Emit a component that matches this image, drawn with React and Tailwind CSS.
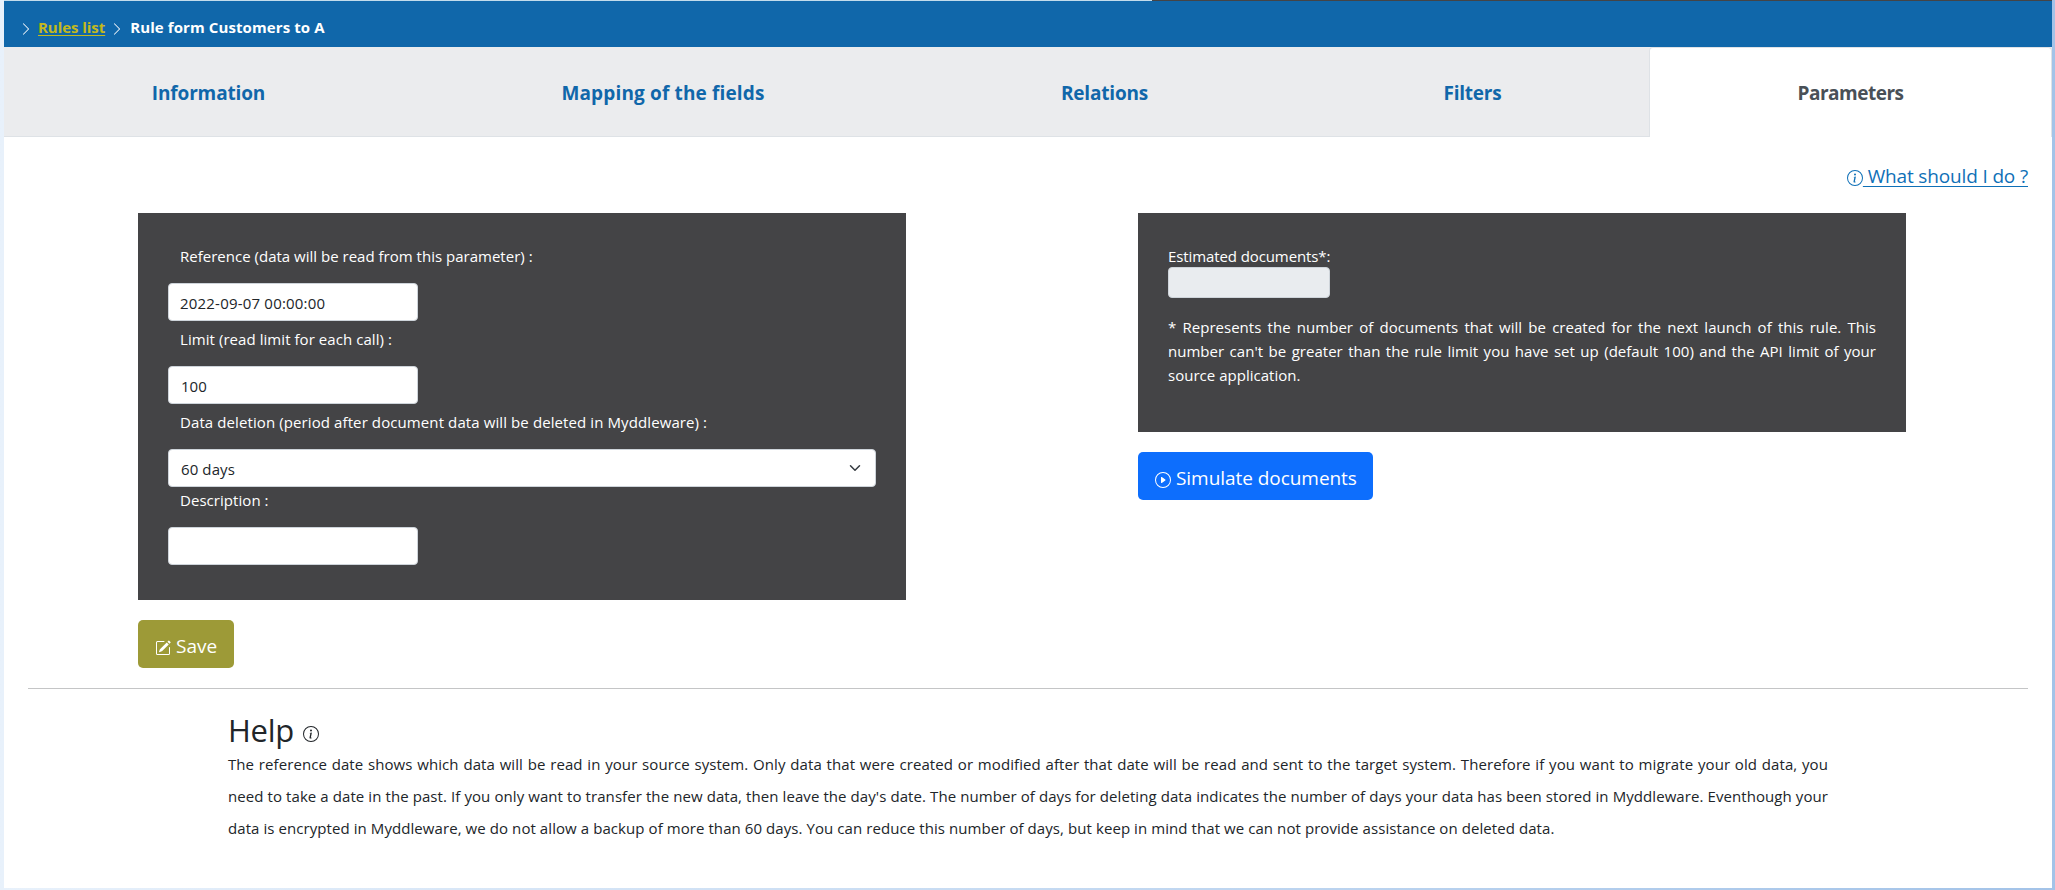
import { BsChevronRight, BsInfoCircle, BsPlayCircle, BsPencilSquare } from "react-icons/bs";

const tabs = [
  { label: "Information", cls: "w-[409px] tracking-[-0.15px]" },
  { label: "Mapping of the fields", cls: "w-[500px] tracking-[0.15px]" },
  { label: "Relations", cls: "w-[383px] tracking-[-0.2px]" },
  { label: "Filters", cls: "w-[353px] tracking-[-0.25px]" },
];

function Label({ children, className = "" }) {
  return (
    <label className={`mb-4 block h-6 pl-3 text-[15px] leading-[27px] whitespace-nowrap text-white ${className}`}>
      {children}
    </label>
  );
}

const control = "block h-[38px] rounded border border-[#ced4da] bg-white px-3 text-[15px] leading-[24px] text-[#212529] outline-none";

function Chevron({ className }) {
  return <BsChevronRight className={`h-3.5 w-3.5 text-white ${className}`} />;
}

function SelectArrow() {
  return (
    <svg viewBox="0 0 16 16" className="h-3 w-4" fill="none" stroke="#343a40" strokeWidth="2" strokeLinecap="round" strokeLinejoin="round">
      <path d="m2 5 6 6 6-6" />
    </svg>
  );
}

export default function App() {
  return (
    <div className="h-[890px] w-[2055px] overflow-hidden bg-gradient-to-r from-[#e8f1fb] to-[#a3c3e8] font-['Open_Sans',sans-serif] text-[#212529]">
      <div className="flex h-px pl-1">
        <div className="w-[1148px] bg-[#c3dcec]" />
        <div className="w-[900px] bg-[#444446]" />
      </div>
      <div className="ml-1 flex h-[887px] w-[2048px] flex-col bg-white">
        <nav className="flex h-[46px] items-center bg-[#1067aa] pl-[15px] text-[15px] font-bold text-white">
          <Chevron className="mt-[9px]" />
          <a className="mt-[5px] ml-[5px] leading-6 tracking-[-0.05px] text-[#c4b91c] underline decoration-1 underline-offset-2">Rules list</a>
          <Chevron className="mt-[9px] ml-[5px]" />
          <span className="mt-[5px] ml-[6px] leading-6 tracking-[0.1px]">Rule form Customers to A</span>
        </nav>

        <div className="flex h-[90px] shrink-0 bg-[#ebecee] text-[19px] font-bold">
          {tabs.map((t) => (
            <div key={t.label} className={`flex shrink-0 items-center justify-center border-b border-[#dee2e6] pt-[3px] text-[#1067aa] ${t.cls}`}>
              {t.label}
            </div>
          ))}
          <div className="flex w-[403px] items-center justify-center rounded-t border border-b-0 border-[#dee2e6] bg-white pt-px text-[#495057] tracking-[-0.5px]">
            Parameters
          </div>
        </div>

        <div className="mt-[22px] flex h-[54px] justify-end pr-6 text-[#0f70b7]">
          <a className="flex h-8 items-center">
            <BsInfoCircle className="mt-[6px] h-4 w-4" />
            <span className="mt-[2px] text-[19px] tracking-[-0.15px] whitespace-pre underline decoration-1 underline-offset-[3px]">{" What should I do ?"}</span>
          </a>
        </div>

        <div className="flex gap-[232px] pl-[134px]">
          <div className="w-[768px]">
            <section className="h-[387px] bg-[#444446] p-[30px]">
              <Label className="tracking-[0.01px]">Reference (data will be read from this parameter) :</Label>
              <input className={`${control} mb-[5px] w-[250px] pt-0.5 pl-[11px] tracking-[0.2px]`} defaultValue="2022-09-07 00:00:00" />
              <Label className="tracking-[0.06px]">Limit (read limit for each call) :</Label>
              <input className={`${control} mb-[5px] w-[250px] pt-0.5`} defaultValue="100" />
              <Label className="tracking-[0.1px]">Data deletion (period after document data will be deleted in Myddleware) :</Label>
              <div className={`${control} flex! w-[708px] items-center justify-between tracking-[0.1px]`}>
                <span className="pt-0.5">60 days</span>
                <SelectArrow />
              </div>
              <Label className="tracking-[0.05px]">Description :</Label>
              <input className={`${control} w-[250px]`} />
            </section>
            <button className="mt-5 flex h-12 w-24 items-center rounded-[5px] bg-[#9d9a37] pl-[17px] text-[19px] text-white">
              <BsPencilSquare className="mt-2 h-4 w-4" />
              <span className="mt-1 ml-[5px]">Save</span>
            </button>
          </div>

          <div className="w-[768px]">
            <section className="h-[219px] bg-[#444446] p-[30px] text-[15px] text-white">
              <div className="h-6 leading-[27px] tracking-[-0.1px]">Estimated documents*:</div>
              <div className="h-[31px] w-[162px] rounded border border-[#ced4da] bg-[#e9ecef]" />
              <p className="mt-[17px] text-justify leading-6 tracking-[0.02px]">
                * Represents the number of documents that will be created for the next launch of this rule. This number can't be greater than the rule limit you have set up (default 100) and the API limit of your source application.
              </p>
            </section>
            <button className="mt-5 flex h-12 w-[235px] items-center rounded-[5px] bg-[#0d6efd] pl-[17px] text-[19px] text-white">
              <BsPlayCircle className="mt-2 h-4 w-4" />
              <span className="mt-1 ml-[5px] tracking-[-0.05px] whitespace-nowrap">Simulate documents</span>
            </button>
          </div>
        </div>

        <div className="mx-6 mt-5 h-px shrink-0 bg-[#c4c5c6]" />

        <div className="ml-56 w-[1600px] pt-[22px]">
          <h2 className="flex h-[37px] items-center text-[31px] tracking-[-0.3px]">
            <span className="mt-0.5">Help</span>
            <BsInfoCircle className="mt-[9px] ml-[9px] h-4 w-4" />
          </h2>
          <p className="text-justify text-[15px] leading-8 tracking-[0.075px]">
            The reference date shows which data will be read in your source system. Only data that were created or modified after that date will be read and sent to the target system. Therefore if you want to migrate your old data, you need to take a date in the past. If you only want to transfer the new data, then leave the day's date. The number of days for deleting data indicates the number of days your data has been stored in Myddleware. Eventhough your data is encrypted in Myddleware, we do not allow a backup of more than 60 days. You can reduce this number of days, but keep in mind that we can not provide assistance on deleted data.
          </p>
        </div>
      </div>
    </div>
  );
}
